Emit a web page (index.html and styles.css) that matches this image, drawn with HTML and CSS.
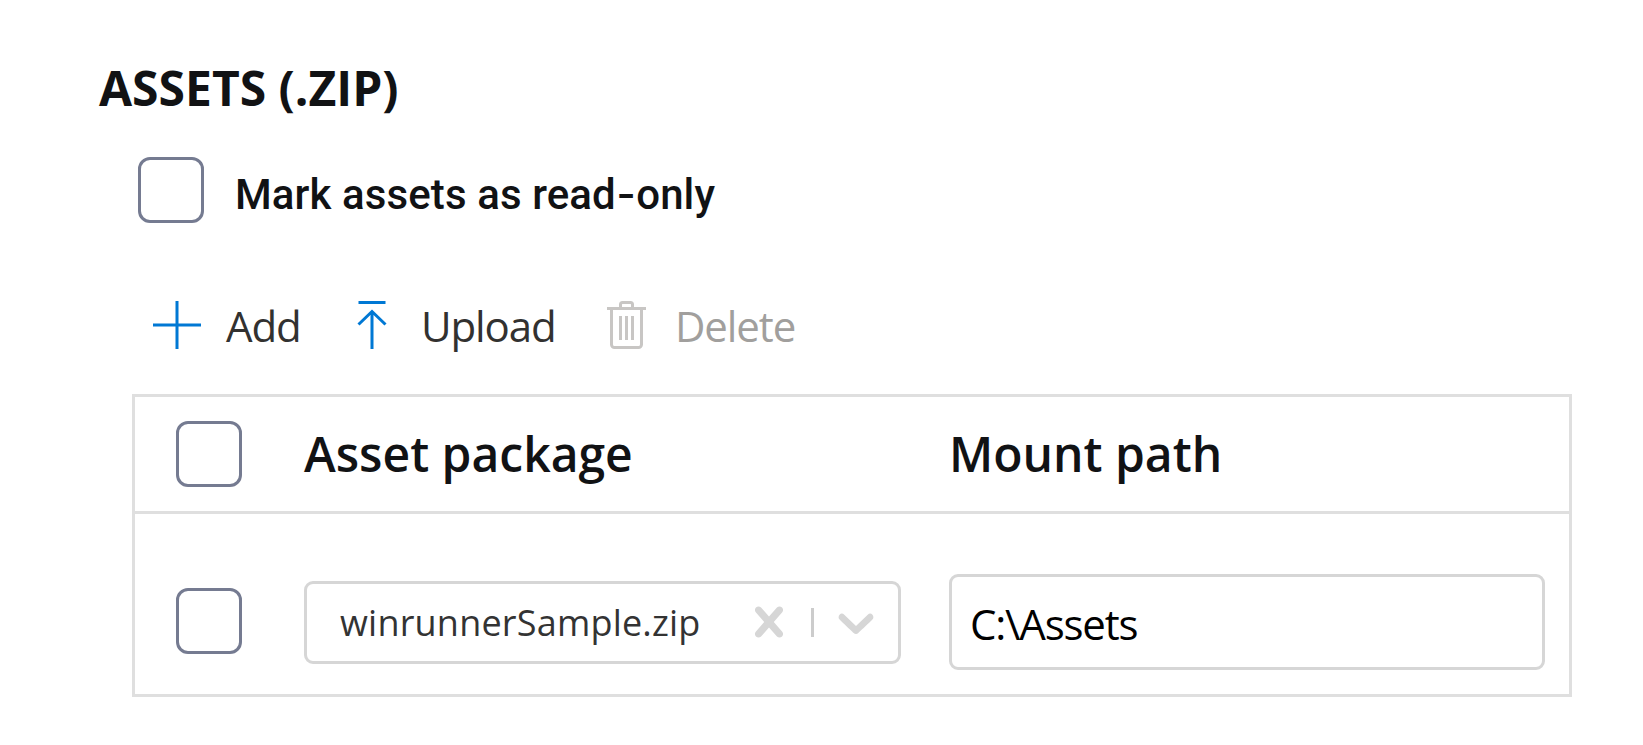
FILE: index.html
```html
<!DOCTYPE html>
<html lang="en">
<head>
<meta charset="utf-8">
<title>Assets</title>
<link rel="stylesheet" href="styles.css">
</head>
<body>
<main class="assets">
  <h1 class="title">ASSETS (.ZIP)</h1>
  <label class="readonly"><i class="checkbox"></i><span class="readonly-label">Mark assets as read<span class="hyphen">-</span>only</span></label>
  <div class="toolbar">
    <button class="command add">
      <svg width="48" height="48" viewBox="0 0 48 48"><path d="M24 0v48M0 24h48" stroke="#0078d4" stroke-width="3" fill="none"/></svg>
      <span>Add</span>
    </button>
    <button class="command upload">
      <svg width="30" height="48" viewBox="0 0 30 48"><path d="M1.500 1.500h27M15 10.500v37.500M1.500 23.500L15 10.500l13.500 13" stroke="#0078d4" stroke-width="3" fill="none"/></svg>
      <span>Upload</span>
    </button>
    <button class="command delete" disabled>
      <svg width="39" height="48" viewBox="0 0 39 48"><path d="M0 7.500h39M13.500 7V3.500a2 2 0 0 1 2-2h8a2 2 0 0 1 2 2V7M4.500 8v35.500a3 3 0 0 0 3 3h24a3 3 0 0 0 3-3V8M13.500 15v24M19.500 15v24M25.500 15v24" stroke="#c8c6c4" stroke-width="3" fill="none"/></svg>
      <span>Delete</span>
    </button>
  </div>
  <section class="table">
    <div class="row head">
      <i class="checkbox"></i>
      <span class="heading package">Asset package</span>
      <span class="heading path">Mount path</span>
    </div>
    <div class="row body-row">
      <i class="checkbox"></i>
      <div class="select">
        <span class="value">winrunnerSample.zip</span>
        <svg width="60" height="60" viewBox="0 0 20 20"><path d="M14.348 14.849c-0.469 0.469-1.229 0.469-1.697 0l-2.651-3.030-2.651 3.029c-0.469 0.469-1.229 0.469-1.697 0-0.469-0.469-0.469-1.229 0-1.697l2.758-3.15-2.759-3.152c-0.469-0.469-0.469-1.228 0-1.697s1.228-0.469 1.697 0l2.652 3.031 2.651-3.031c0.469-0.469 1.228-0.469 1.697 0s0.469 1.229 0 1.697l-2.758 3.152 2.758 3.15c0.469 0.469 0.469 1.229 0 1.698z"/></svg>
        <i class="separator"></i>
        <svg width="60" height="60" viewBox="0 0 20 20"><path d="M4.516 7.548c0.436-0.446 1.043-0.481 1.576 0l3.908 3.747 3.908-3.747c0.533-0.481 1.141-0.446 1.574 0 0.436 0.445 0.408 1.197 0 1.615-0.406 0.418-4.695 4.502-4.695 4.502-0.217 0.223-0.502 0.335-0.787 0.335s-0.57-0.112-0.789-0.335c0 0-4.287-4.084-4.695-4.502s-0.436-1.17 0-1.615z"/></svg>
      </div>
      <div class="input">C:\Assets</div>
    </div>
  </section>
</main>
</body>
</html>
```

FILE: styles.css
```css
* { box-sizing: border-box; }
body {
  margin: 0;
  background: #fff;
  color: #111214;
  font-family: "Open Sans", "Noto Sans", sans-serif;
}
.assets { width: 1572px; padding: 55px 0 0 99px; }
.title { margin: 0; font-size: 48px; line-height: 66px; font-weight: 700; white-space: nowrap; }
.checkbox {
  display: block;
  flex: none;
  width: 66px;
  height: 66px;
  border: 3px solid #757b91;
  border-radius: 12px;
}
.readonly { display: flex; align-items: center; margin: 36px 0 0 39px; }
.readonly-label {
  margin: 10px 0 0 31px;
  font: 500 42px/50px Roboto, sans-serif;
  letter-spacing: 0.1px;
  white-space: nowrap;
}
.hyphen { display: inline-block; margin: 0 3px; transform: scaleX(1.25); }
.toolbar { display: flex; height: 60px; margin: 72px 0 0 54px; align-items: center; }
.command {
  display: flex;
  align-items: center;
  padding: 0;
  border: 0;
  background: none;
  color: #323130;
  font: 400 42px/60px "Open Sans", sans-serif;
  letter-spacing: -1.1px;
}
.command svg { display: block; flex: none; }
.command span { height: 60px; padding-top: 1px; }
.add { width: 204px; }
.add span { margin-left: 25px; }
.upload { width: 250px; }
.upload span { margin-left: 34px; }
.delete { color: #a19f9d; }
.delete span { margin-left: 29px; }
.table { margin: 39px 0 0 33px; border: 3px solid #dfdfdf; }
.row { display: flex; align-items: center; padding-left: 41px; }
.head { height: 117px; border-bottom: 3px solid #dfdfdf; }
.heading { font-size: 48px; line-height: 66px; font-weight: 600; white-space: nowrap; }
.package { width: 645px; margin-left: 62px; }
.body-row { height: 180px; padding-top: 34px; }
.select {
  display: flex;
  align-items: center;
  width: 597px;
  height: 83px;
  margin: 2px 0 0 62px;
  padding-left: 33px;
  border: 3px solid #d6d6d6;
  border-radius: 9px;
}
.value { width: 399px; color: #333; font-size: 36px; letter-spacing: 0.2px; white-space: nowrap; }
.select svg { flex: none; fill: #d6d6d6; }
.separator { width: 3px; height: 29px; margin: 0 12px; background: #ccc; }
.input {
  width: 596px;
  height: 96px;
  margin: 2px 0 0 48px;
  padding-left: 18px;
  border: 3px solid #d6d6d6;
  border-radius: 9px;
  color: #000;
  font-size: 42px;
  line-height: 93px;
  letter-spacing: -1.2px;
}
```
